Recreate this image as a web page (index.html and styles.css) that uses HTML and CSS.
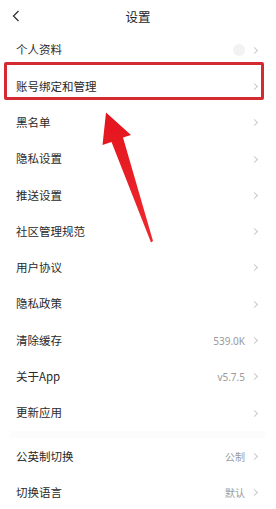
FILE: index.html
```html
<!DOCTYPE html>
<html lang="zh-CN">
<head>
    <meta charset="UTF-8">
    <meta name="viewport" content="width=device-width, initial-scale=1.0">
    <link rel="stylesheet" href="styles.css">
    <title>设置</title>
</head>
<body>
    <div class="screen">
        <div class="header">
            <svg class="back" width="8" height="12" viewBox="0 0 8 12">
                <polyline points="6.5,1 1.5,6 6.5,11" fill="none" stroke="#333" stroke-width="1.3"/>
            </svg>
            <span class="title">设置</span>
        </div>

        <div class="list">
            <div class="row"><span class="label">个人资料</span><span class="avatar"></span><i class="chev"></i></div>
            <div class="row"><span class="label">账号绑定和管理</span><i class="chev"></i></div>
            <div class="row"><span class="label">黑名单</span><i class="chev"></i></div>
            <div class="row"><span class="label">隐私设置</span><i class="chev"></i></div>
            <div class="row"><span class="label">推送设置</span><i class="chev"></i></div>
            <div class="row"><span class="label">社区管理规范</span><i class="chev"></i></div>
            <div class="row"><span class="label">用户协议</span><i class="chev"></i></div>
            <div class="row"><span class="label">隐私政策</span><i class="chev"></i></div>
            <div class="row"><span class="label">清除缓存</span><span class="value">539.0K</span><i class="chev"></i></div>
            <div class="row"><span class="label">关于App</span><span class="value">v5.7.5</span><i class="chev"></i></div>
            <div class="row"><span class="label">更新应用</span><i class="chev"></i></div>
        </div>
        <div class="divider"></div>
        <div class="list">
            <div class="row"><span class="label">公英制切换</span><span class="value">公制</span><i class="chev"></i></div>
            <div class="row"><span class="label">切换语言</span><span class="value">默认</span><i class="chev"></i></div>
        </div>

        <div class="highlight"></div>
        <svg class="pointer" width="276" height="509" viewBox="0 0 276 509">
            <defs>
                <linearGradient id="arrowFill" x1="0" y1="0" x2="0" y2="1">
                    <stop offset="0" stop-color="#e4141d"/>
                    <stop offset="1" stop-color="#ee2a2f"/>
                </linearGradient>
            </defs>
            <polygon points="106,112.5 131,135 123,137.5 153,241 151,242.5 111.5,142 102.5,145" fill="url(#arrowFill)"/>
        </svg>
    </div>
</body>
</html>
```

FILE: styles.css
```css
body {
    margin: 0;
    background: #fff;
    font-family: "Noto Sans CJK SC", "Noto Sans", sans-serif;
    color: #2a2a2a;
}

.screen {
    position: relative;
    width: 276px;
    height: 509px;
    overflow: hidden;
}

.header {
    height: 32px;
    display: flex;
    align-items: center;
    justify-content: center;
    position: relative;
}

.back {
    position: absolute;
    left: 12px;
    top: 10px;
}

.title {
    font-size: 12.5px;
    color: #222;
}

.row {
    height: 36.3px;
    display: flex;
    align-items: center;
    padding: 0 18px 0 16px;
}

.label {
    flex: 1;
    font-size: 11.5px;
    line-height: 1;
}

.value {
    font-family: "Noto Sans", "Noto Sans CJK SC", sans-serif;
    font-size: 10px;
    color: #9a9a9a;
    margin-right: 7px;
}

.avatar {
    width: 12px;
    height: 12px;
    border-radius: 50%;
    background: #f2f2f2;
    margin-right: 7px;
}

.chev {
    width: 4px;
    height: 4px;
    border-top: 1px solid #cacaca;
    border-right: 1px solid #cacaca;
    transform: rotate(45deg);
    margin-right: 1px;
}

.divider {
    height: 7px;
    margin: 0 10px;
    background: #fcfcfc;
}

.highlight {
    position: absolute;
    left: 3.5px;
    top: 62px;
    width: 254px;
    height: 32px;
    border: 3px solid #d42a32;
    border-radius: 2px;
}

.pointer {
    position: absolute;
    left: 0;
    top: 0;
}
```
